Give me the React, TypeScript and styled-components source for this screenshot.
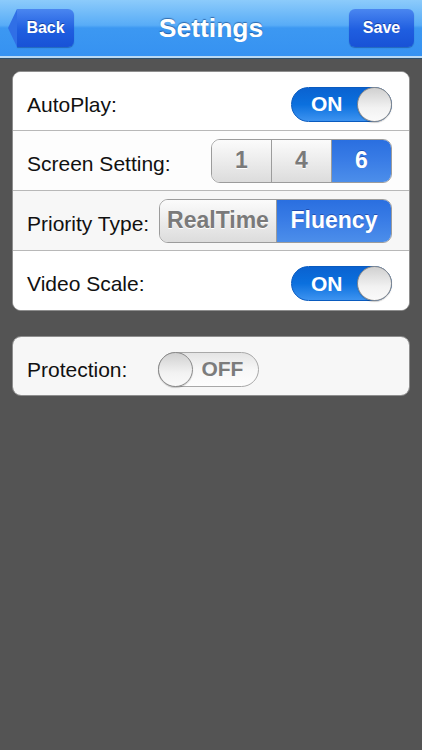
import React from 'react';
import styled, { createGlobalStyle } from 'styled-components';

const GlobalStyle = createGlobalStyle`
    html, body {
        margin: 0;
        padding: 0;
        background: #545454;
        font-family: "Liberation Sans", Arial, sans-serif;
    }
`;

const Screen = styled.div`
    width: 422px;
    min-height: 750px;
    background: #545454;
`;

const NavBar = styled.div`
    height: 56px;
    display: flex;
    align-items: center;
    justify-content: space-between;
    padding: 0 8px;
    background: linear-gradient(to bottom, #8ccbfb 0%, #58acf7 45%, #3c98f2 50%, #3692f1 100%);
    border-bottom: 2px solid #b9d9f3;
    box-shadow: 0 1px 0 #2f4f6a;
    position: relative;
`;

const Title = styled.div`
    position: absolute;
    left: 0;
    right: 0;
    top: 0;
    height: 56px;
    line-height: 56px;
    text-align: center;
    color: #fff;
    font-size: 26.5px;
    font-weight: 700;
    text-shadow: 0 -1px 1px rgba(0, 40, 100, 0.5);
    pointer-events: none;
`;

const BackButton = styled.div`
    position: relative;
    z-index: 1;
    height: 38px;
    width: 57px;
    margin-left: 9px;
    display: flex;
    align-items: center;
    justify-content: center;
    color: #fff;
    font-size: 16px;
    font-weight: 700;
    background: linear-gradient(to bottom, #4a86f0, #1f5ee0 55%, #1852d6);
    border-radius: 0 6px 6px 0;
    box-shadow: 0 1px 1px rgba(0, 40, 110, 0.4);
    text-shadow: 0 -1px 0 rgba(0, 0, 60, 0.4);

    &::before {
        content: '';
        position: absolute;
        left: -9px;
        top: 0;
        width: 0;
        height: 0;
        border-top: 19px solid transparent;
        border-bottom: 19px solid transparent;
        border-right: 9px solid #306fe6;
    }
`;

const SaveButton = styled.div`
    z-index: 1;
    height: 38px;
    width: 65px;
    display: flex;
    align-items: center;
    justify-content: center;
    color: #fff;
    font-size: 16px;
    font-weight: 700;
    background: linear-gradient(to bottom, #4a86f0, #1f5ee0 55%, #1852d6);
    border-radius: 6px;
    box-shadow: 0 1px 1px rgba(0, 40, 110, 0.4);
    text-shadow: 0 -1px 0 rgba(0, 0, 60, 0.4);
`;

const Content = styled.div`
    padding: 13px 12px 0 12px;
    display: flex;
    flex-direction: column;
    gap: 25px;
`;

const Card = styled.div`
    border-radius: 9px;
    border: 1px solid #8e8e8e;
    overflow: hidden;
    background: #f7f7f7;
`;

const Row = styled.div<{ $bg?: string }>`
    height: 59px;
    display: flex;
    align-items: center;
    padding: 0 17px 0 14px;
    background: ${p => p.$bg || '#f7f7f7'};
    border-top: 1px solid #b8b8b8;

    &:first-child {
        height: 58px;
        border-top: none;
    }
`;

const Label = styled.span<{ $gap?: number }>`
    font-size: 21px;
    color: #111;
    margin-top: 7px;
    margin-right: ${p => (p.$gap ? `${p.$gap}px` : 'auto')};
`;

const Switch = styled.div<{ $on: boolean }>`
    position: relative;
    width: 101px;
    height: 35px;
    margin-top: 6px;
    border-radius: 18px;
    box-sizing: border-box;
    display: flex;
    align-items: center;
    border: 1px solid ${p => (p.$on ? '#0a5bbf' : '#a8a8a8')};
    background: ${p =>
        p.$on
            ? 'linear-gradient(to bottom, #0a62d0 0%, #0b70de 50%, #3d93f0 100%)'
            : 'linear-gradient(to bottom, #e4e4e4 0%, #f7f7f7 50%, #fdfdfd 100%)'};
    color: ${p => (p.$on ? '#fff' : '#7c7c7c')};
    font-size: 21px;
    font-weight: 700;
    justify-content: ${p => (p.$on ? 'flex-start' : 'flex-end')};
    padding: ${p => (p.$on ? '0 0 0 19px' : '0 15px 0 0')};
`;

const Knob = styled.div<{ $on: boolean }>`
    position: absolute;
    top: -1px;
    ${p => (p.$on ? 'right: -1px;' : 'left: -1px;')}
    width: 35px;
    height: 35px;
    box-sizing: border-box;
    border-radius: 50%;
    border: 1px solid #8a8a8a;
    background: linear-gradient(to bottom, #d0d0d0, #f2f2f2 60%, #fafafa);
    box-shadow: 0 1px 1px rgba(0, 0, 0, 0.2);
`;

const Segmented = styled.div`
    display: flex;
    height: 44px;
    border-radius: 9px;
    border: 1px solid #9c9c9c;
    overflow: hidden;
    box-sizing: border-box;
`;

const Segment = styled.div<{ $active: boolean; $w: number }>`
    width: ${p => p.$w}px;
    display: flex;
    align-items: center;
    justify-content: center;
    font-size: 23px;
    font-weight: 700;
    border-left: 1px solid #9c9c9c;
    color: ${p => (p.$active ? '#fff' : '#7a7a7a')};
    background: ${p =>
        p.$active
            ? 'linear-gradient(to bottom, #2a6fe0 0%, #3a7de6 50%, #4c8eea 100%)'
            : 'linear-gradient(to bottom, #fbfbfb 0%, #ececec 50%, #dcdcdc 100%)'};
    text-shadow: ${p => (p.$active ? '0 -1px 0 rgba(0,0,80,0.35)' : '0 1px 0 #fff')};

    &:first-child {
        border-left: none;
    }
`;

export default function App() {
    return (
        <Screen>
            <GlobalStyle />
            <NavBar>
                <BackButton>Back</BackButton>
                <Title>Settings</Title>
                <SaveButton>Save</SaveButton>
            </NavBar>
            <Content>
                <Card>
                    <Row $bg="#ffffff">
                        <Label>AutoPlay:</Label>
                        <Switch $on>ON<Knob $on /></Switch>
                    </Row>
                    <Row $bg="#fdfdfd">
                        <Label>Screen Setting:</Label>
                        <Segmented>
                            <Segment $active={false} $w={59}>1</Segment>
                            <Segment $active={false} $w={59}>4</Segment>
                            <Segment $active $w={59}>6</Segment>
                        </Segmented>
                    </Row>
                    <Row $bg="#f7f7f7">
                        <Label>Priority Type:</Label>
                        <Segmented>
                            <Segment $active={false} $w={116}>RealTime</Segment>
                            <Segment $active $w={114}>Fluency</Segment>
                        </Segmented>
                    </Row>
                    <Row $bg="#ffffff">
                        <Label>Video Scale:</Label>
                        <Switch $on>ON<Knob $on /></Switch>
                    </Row>
                </Card>
                <Card>
                    <Row>
                        <Label $gap={31}>Protection:</Label>
                        <Switch $on={false}>OFF<Knob $on={false} /></Switch>
                    </Row>
                </Card>
            </Content>
        </Screen>
    );
}
